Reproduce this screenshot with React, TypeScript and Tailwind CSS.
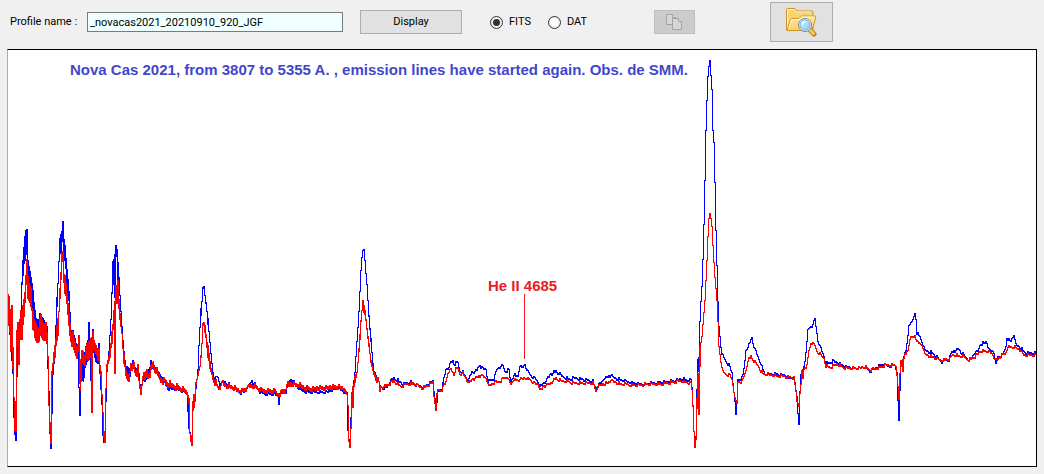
import React from "react";

// Each sample is [x, top, bottom]; when bottom is left out the trace is one thin line.
type Sample = [number, number, number?];

const blueProfile: Sample[] = [
  [8, 295, 322], [10, 310, 345], [12, 330, 370], [13, 360, 420], [14, 417, 436], [15, 425, 441], [16, 350, 389],
  [18, 340, 363], [20, 313, 325], [21, 283, 310], [22, 260, 285], [23, 246, 275], [24, 234, 262], [25, 227, 258],
  [26, 232, 258], [27, 237, 275], [28, 261, 280], [30, 270, 285], [32, 280, 308], [34, 303, 325], [36, 317, 335],
  [40, 315, 335], [44, 318, 335], [46, 328, 338], [48, 370, 400], [49, 390, 432], [50, 430, 446], [51, 410, 427],
  [52, 370, 388], [54, 350, 365], [55, 325, 345], [56, 296, 320], [57, 281, 305], [58, 258, 280], [59, 240, 262],
  [60, 235, 255], [61, 231, 252], [62, 220, 241], [63, 231, 252], [64, 236, 257], [66, 260, 285], [68, 279, 300],
  [69, 290, 315], [71, 330, 340], [74, 335, 348], [77, 345, 355], [78, 350, 390], [79, 391, 417], [80, 376, 416],
  [81, 360, 380], [83, 350, 380], [85, 348, 370], [87, 340, 362], [88, 321, 360], [89, 340, 355], [90, 350, 377],
  [92, 331, 350], [95, 345, 360], [98, 345, 360], [101, 375, 403], [102, 395, 433], [103, 425, 440], [104, 434, 440],
  [105, 403, 412], [106, 372, 385], [108, 350, 358], [110, 316, 330], [111, 294, 310], [112, 262, 295], [113, 259, 285],
  [114, 253, 296], [115, 243, 275], [116, 246, 254], [117, 254, 285], [118, 264, 295], [119, 278, 296], [121, 312, 325],
  [123, 340, 350], [125, 366, 373], [128, 366, 376], [131, 366, 369], [132, 361, 367], [135, 366, 369], [137, 365, 370],
  [138, 368, 374], [140, 388, 393], [142, 378, 381], [144, 379, 382], [146, 375, 380], [148, 368, 372], [150, 361, 367],
  [153, 362, 368], [156, 368, 371], [158, 371, 374], [162, 376, 379], [165, 382, 385], [168, 386, 389], [174, 387, 389],
  [180, 388, 390], [186, 391, 393], [188, 400, 425], [190, 434, 442], [191, 440, 444], [192, 410, 420], [193, 398, 408],
  [195, 390, 400], [196, 380], [197, 370], [198, 345, 355], [200, 306, 325], [202, 289, 300], [203, 287, 290],
  [204, 288, 295], [206, 301, 310], [208, 320, 333], [210, 345, 354], [212, 365, 371], [214, 378, 381], [217, 376],
  [219, 383], [223, 380, 382], [226, 382, 384], [232, 386, 388], [240, 391, 393], [243, 390, 392], [248, 385, 387],
  [251, 380, 383], [255, 384, 386], [260, 391, 393], [268, 392, 394], [273, 392, 394], [277, 393, 395], [278, 395, 403],
  [279, 392, 395], [285, 391], [288, 381, 383], [291, 378, 381], [294, 382, 384], [300, 388, 390], [306, 390, 392],
  [313, 391], [320, 391], [326, 391], [332, 388, 390], [338, 387], [342, 390], [346, 392], [347, 400, 430],
  [349, 440, 445], [350, 415, 425], [352, 390, 400], [354, 372], [356, 340], [358, 312], [360, 270], [361, 257],
  [362, 249], [363, 248], [364, 255, 262], [366, 275, 285], [368, 301, 315], [370, 325, 338], [372, 355, 370],
  [374, 371], [376, 375], [379, 384], [382, 387], [386, 386], [389, 381], [393, 377], [397, 379], [402, 383],
  [410, 381], [416, 384], [422, 386], [428, 383], [432, 380], [434, 390, 401], [436, 402], [437, 390], [441, 388],
  [443, 378], [445, 369], [448, 366], [450, 361], [452, 360], [454, 363], [457, 361], [459, 370], [462, 371],
  [465, 376], [468, 379], [471, 371], [475, 370], [479, 364], [481, 367], [485, 368], [487, 380], [490, 379],
  [493, 378], [496, 369], [499, 366], [502, 364], [504, 370], [508, 369], [510, 382], [513, 374], [517, 375],
  [519, 365], [521, 367], [524, 364], [527, 370], [531, 375], [535, 378], [540, 385], [545, 380], [549, 374],
  [555, 370], [560, 374], [567, 378], [575, 377], [585, 379], [592, 380], [594, 385], [596, 386], [600, 382],
  [604, 377], [610, 374], [614, 377], [622, 379], [632, 382], [642, 383], [652, 382], [662, 381], [672, 380],
  [680, 378], [690, 379], [691, 386], [692, 404], [693, 430], [694, 443], [695, 435], [696, 390], [697, 360],
  [698, 357, 371], [699, 320, 370], [700, 300], [701, 285], [702, 260], [703, 225], [704, 180], [705, 130],
  [706, 100], [707, 75], [708, 64, 70], [709, 62, 66], [710, 66, 76], [711, 88], [712, 110, 130], [713, 140],
  [714, 180], [715, 230], [716, 265], [717, 300], [718, 325], [720, 345], [721, 352], [724, 358], [728, 364],
  [731, 371], [732, 382], [733, 390], [734, 398], [735, 405, 415], [736, 400], [737, 379], [740, 378], [742, 375],
  [744, 360], [745, 350], [748, 344], [751, 337], [753, 345], [756, 353], [760, 362], [764, 373], [770, 373],
  [785, 374], [788, 377], [792, 376], [794, 382], [796, 395], [797, 412], [798, 418, 423], [799, 390], [800, 375],
  [801, 371], [803, 366], [804, 360], [806, 342], [807, 330], [808, 328], [811, 325], [813, 321], [814, 318],
  [815, 325], [817, 339], [819, 345], [822, 352], [825, 362], [829, 362], [832, 360], [838, 362], [845, 366],
  [855, 367], [865, 366], [869, 370], [875, 367], [882, 363], [888, 365], [894, 364], [896, 370], [897, 400],
  [898, 415, 421], [899, 390], [900, 363], [902, 358], [905, 350], [907, 335], [908, 324], [911, 322], [913, 316],
  [914, 313], [915, 317], [916, 332], [919, 335], [921, 340], [924, 349], [932, 352], [938, 358], [941, 361],
  [944, 358], [948, 359], [951, 351], [958, 348], [962, 353], [969, 360], [973, 353], [977, 350], [980, 343],
  [986, 341], [988, 348], [993, 351], [995, 363], [997, 356], [1002, 354], [1005, 346], [1006, 337], [1010, 340],
  [1013, 334], [1015, 343], [1020, 347], [1025, 352], [1035, 352],
];

const redProfile: Sample[] = [
  [7, 294, 320], [9, 296, 332], [10, 308, 350], [11, 303, 340], [12, 318, 365], [13, 350, 400], [14, 400, 432],
  [15, 402, 432], [16, 330, 402], [17, 321, 345], [18, 320, 362], [19, 316, 350], [20, 312, 342], [21, 313, 340],
  [22, 305, 332], [24, 290, 315], [25, 272, 300], [26, 262, 288], [27, 270, 300], [29, 283, 302], [31, 286, 308],
  [32, 305, 326], [34, 320, 338], [36, 322, 341], [38, 325, 338], [40, 316, 338], [43, 322, 339], [45, 319, 336],
  [46, 328, 345], [47, 333, 360], [48, 356, 405], [49, 405, 430], [50, 420, 441], [51, 368, 420], [52, 366, 378],
  [53, 354, 368], [55, 338, 358], [56, 324, 345], [58, 308, 333], [59, 290, 310], [60, 273, 300], [61, 252, 280],
  [62, 251, 262], [63, 260, 280], [64, 271, 290], [66, 285, 305], [67, 294, 315], [69, 312, 334], [71, 330, 343],
  [73, 335, 350], [76, 345, 357], [78, 338, 355], [79, 376, 385], [80, 360, 392], [81, 350, 382], [82, 350, 362],
  [84, 352, 362], [86, 345, 360], [88, 340, 360], [90, 335, 355], [91, 340, 415], [92, 333, 350], [94, 340, 350],
  [96, 343, 353], [98, 350, 362], [100, 365, 375], [101, 370, 395], [102, 392, 410], [103, 410, 434], [104, 434, 445],
  [105, 390, 445], [106, 365, 390], [107, 360, 370], [108, 355, 363], [110, 340, 355], [112, 325, 345], [113, 310, 330],
  [114, 300, 372], [115, 283, 300], [117, 283, 300], [119, 300, 320], [121, 325, 332], [123, 345, 360], [125, 366, 376],
  [127, 373, 380], [128, 373, 380], [130, 365, 371], [132, 364, 371], [133, 362, 368], [135, 370, 374], [137, 366, 373],
  [139, 380, 388], [140, 386, 394], [141, 384, 391], [142, 374, 382], [144, 374, 380], [146, 369, 378], [148, 372, 375],
  [150, 367, 374], [152, 362, 368], [153, 361, 369], [155, 368, 372], [157, 370, 376], [160, 376, 381], [164, 378, 382],
  [166, 380, 385], [170, 383, 387], [175, 384, 388], [180, 386, 390], [185, 389, 392], [187, 391, 396], [188, 392, 400],
  [189, 400, 435], [190, 434, 442], [191, 435, 445], [192, 400, 432], [193, 393, 410], [194, 391, 405], [195, 385, 405],
  [196, 380, 386], [198, 370, 376], [199, 365, 370], [201, 340, 355], [202, 325, 340], [203, 323, 327], [205, 325, 337],
  [207, 340, 355], [209, 355, 370], [211, 368, 374], [213, 376, 381], [215, 380, 384], [218, 386, 389], [222, 381, 384],
  [226, 384, 387], [232, 385, 388], [237, 388, 391], [241, 389, 392], [245, 387, 390], [249, 384, 387], [254, 384, 387],
  [260, 388, 391], [265, 389, 392], [275, 389, 392], [277, 393, 396], [281, 390, 393], [285, 388, 391], [287, 382, 386],
  [292, 382, 385], [298, 383, 386], [305, 386, 389], [312, 387, 390], [318, 386, 389], [325, 386, 389], [332, 385, 388],
  [338, 385, 388], [344, 387, 390], [346, 392, 395], [347, 395, 405], [348, 410, 440], [349, 440, 446], [350, 425, 438],
  [351, 395, 425], [352, 388, 410], [353, 385, 409], [354, 376, 387], [356, 370, 376], [358, 350, 365], [360, 320, 340],
  [362, 299, 303], [363, 302, 310], [365, 312, 322], [367, 328, 338], [369, 342, 352], [371, 361, 367], [373, 370, 374],
  [376, 376, 381], [378, 379, 382], [379, 385, 391], [380, 386], [385, 385], [390, 382], [393, 380], [397, 383],
  [401, 385], [405, 383], [409, 383], [413, 382], [417, 384], [421, 387], [425, 385], [430, 383], [432, 381],
  [433, 385, 395], [434, 397, 402], [435, 403, 408], [436, 395, 402], [437, 390, 396], [438, 389], [441, 389],
  [443, 384], [445, 381], [447, 372], [449, 370], [450, 368], [453, 373], [455, 368], [457, 367], [459, 373],
  [462, 372], [465, 377], [468, 382], [471, 379], [476, 376], [480, 374], [485, 377], [487, 381], [488, 385],
  [492, 382], [496, 381], [500, 380], [502, 377], [506, 376], [508, 379], [510, 383], [513, 379], [517, 379],
  [520, 378], [524, 377], [529, 378], [533, 382], [537, 383], [540, 389], [543, 385], [549, 383], [555, 377],
  [561, 380], [567, 380], [572, 382], [578, 382], [592, 382], [595, 389, 391], [598, 385], [602, 383], [607, 382],
  [610, 379], [614, 381], [620, 383], [635, 384], [650, 383], [662, 383], [672, 381], [680, 380], [690, 382],
  [691, 388], [692, 405], [693, 430], [694, 440, 446], [695, 438], [696, 400], [697, 374, 410], [698, 376, 414],
  [699, 345, 395], [701, 335], [702, 325], [704, 300], [706, 260], [707, 235], [708, 217], [709, 214], [710, 217],
  [711, 225], [712, 244], [714, 275], [716, 300], [717, 320], [718, 345], [720, 360], [722, 370], [725, 373],
  [729, 374], [731, 378], [733, 390], [735, 400], [736, 402], [737, 382], [739, 380], [741, 381], [743, 376],
  [745, 370], [747, 360], [750, 355], [753, 360], [757, 364], [760, 370], [763, 373], [780, 375], [790, 376],
  [793, 377], [795, 390], [796, 400], [798, 402, 405], [799, 392], [800, 385], [801, 371], [802, 371, 378],
  [804, 366], [806, 365], [808, 350], [810, 343], [812, 341], [814, 344], [816, 350], [820, 354], [823, 357],
  [825, 365], [830, 366], [837, 363], [845, 367], [855, 367], [865, 366], [870, 369], [877, 367], [885, 364],
  [895, 364], [896, 373], [898, 395, 400], [899, 373], [900, 360], [902, 358, 370], [904, 354], [907, 350],
  [909, 338], [912, 336], [914, 335], [917, 341], [921, 343], [924, 353], [932, 356], [940, 359], [949, 358],
  [952, 354], [962, 355], [968, 359], [975, 355], [980, 350], [986, 350], [991, 352], [995, 359], [999, 356],
  [1005, 352], [1007, 346], [1013, 346], [1020, 349], [1023, 354], [1035, 354],
];

// One vertical bar per column, joined into a single stepped line with a little grain.
const toPath = (samples: Sample[]) => {
  const first = samples[0];
  const last = samples[samples.length - 1];
  let d = "";
  let i = 0;
  let previous = first[1];

  for (let x = first[0]; x <= last[0]; x++) {
    while (i < samples.length - 2 && samples[i + 1][0] <= x) i++;
    const [x0, top0, bottom0 = top0] = samples[i];
    const [x1, top1, bottom1 = top1] = samples[i + 1];
    const t = (x - x0) / (x1 - x0);
    const spread = bottom0 - top0 + (bottom1 - top1);
    const grain = ((x * 7919) % 13) / 12 - 0.5;
    const jitter = Math.round(grain * Math.min(6, 2 + spread / 8));
    const top = Math.round(top0 + (top1 - top0) * t) + jitter;
    const bottom = Math.max(top + 1, Math.round(bottom0 + (bottom1 - bottom0) * t) + jitter);
    const falling = (top + bottom) / 2 >= previous;
    const [start, end] = falling ? [top, bottom] : [bottom, top];
    d += d ? `H${x + 0.5}V${start}V${end}` : `M${x + 0.5} ${start}V${end}`;
    previous = (top + bottom) / 2;
  }
  return d;
};

const CopyIcon = () => (
  <svg width="17" height="16" viewBox="0 0 17 16" fill="#d6d6d6" stroke="#a3a3a3" aria-hidden="true">
    <path d="M.5.5h6l3 3v7h-9z" />
    <path d="M6.5.5v3h3" fill="#e4e4e4" />
    <path d="M6.5 4.500h6l3 3v8h-9z" />
    <path d="M12.500 4.500v3h3" fill="#e4e4e4" />
  </svg>
);

const FolderSearchIcon = () => (
  <svg width="31" height="29" viewBox="0 0 31 29" aria-hidden="true">
    <defs>
      <linearGradient id="folder" x1="0" y1="0" x2="0" y2="1">
        <stop offset="0" stopColor="#ffeaa6" />
        <stop offset="1" stopColor="#fbcf62" />
      </linearGradient>
      <linearGradient id="lens" x1="0" y1="0" x2="1" y2="1">
        <stop offset="0" stopColor="#dff4ff" />
        <stop offset="1" stopColor="#7fcbf7" />
      </linearGradient>
    </defs>
    <path d="M.5 22V1.500q0-1 1-1h7q1 0 1.300 1l.7 1.500h15.500q1 0 1 1V22z" fill="#f9d472" stroke="#cf9528" />
    <path d="M1.500 20V1.500h7l1.500 2.500h15" fill="none" stroke="#fff0bd" />
    <path d="M1 22.500l3.500-11q.4-1 1.500-1h6.500l3-2.500H29q1 0 .8 1l-3.600 13.500z" fill="url(#folder)" stroke="#cf9528" />
    <path d="M2.500 21.500l3-10h7.500l3-2.500h12.500" fill="none" stroke="#fff3c8" />
    <path d="M24.500 22.500l3.500 3.500" stroke="#c8821c" strokeWidth="5" strokeLinecap="round" />
    <path d="M24 22l3.500 3.500" stroke="#ffc35a" strokeWidth="3" strokeLinecap="round" />
    <circle cx="19" cy="17" r="6.500" fill="#fff" stroke="#6d8291" />
    <circle cx="19" cy="17" r="5" fill="url(#lens)" stroke="#64b1e4" />
    <path d="M16 16.500q.5-2.500 3.500-3" fill="none" stroke="#fff" strokeWidth="1.500" />
  </svg>
);

const radioClass =
  "size-[13px] appearance-none rounded-full border border-[#333] bg-white bg-clip-content p-[2px] checked:bg-[#333]";

const Toolbar = () => {
  return (
    <form className="flex items-center pt-[2px] pb-[7px] pl-[3px] font-[Roboto,Arial,sans-serif] text-[11px] leading-4">
      <label htmlFor="profile" className="w-[77px] shrink-0 whitespace-nowrap">
        Profile name :
      </label>
      <input
        id="profile"
        type="text"
        defaultValue="_novacas2021_20210910_920_JGF"
        className="h-5 w-64 border border-[#7a7a7a] bg-[#f0ffff] px-[2px] outline-none"
      />
      <button type="button" className="ml-[17px] h-6 w-[102px] border border-[#adadad] bg-[#e1e1e1]">
        Display
      </button>
      <label className="ml-7 flex w-[58px] items-center gap-[6px]">
        <input type="radio" name="format" defaultChecked className={radioClass} />
        FITS
      </label>
      <label className="flex w-[58px] items-center gap-[6px]">
        <input type="radio" name="format" className={radioClass} />
        DAT
      </label>
      <button
        type="button"
        disabled
        aria-label="Copy"
        className="ml-12 flex h-6 w-[41px] items-center justify-center border border-[#bfbfbf] bg-[#cccccc]"
      >
        <CopyIcon />
      </button>
      <button
        type="button"
        aria-label="Open profile"
        className="ml-[75px] flex h-10 w-[63px] items-center justify-center border border-[#adadad] bg-[#e1e1e1]"
      >
        <FolderSearchIcon />
      </button>
    </form>
  );
};

const Spectrum = () => {
  return (
    <svg viewBox="8 50 1028 416" className="block h-auto w-full">
      <g fill="none" strokeWidth="1" shapeRendering="crispEdges">
        <path d={toPath(blueProfile)} stroke="#0000ff" />
        <path d={toPath(redProfile)} stroke="#ff0000" />
        <path d="M524.500 294V359" stroke="#ed1c24" />
      </g>
      <text x="70" y="75" fill="#3f48cc" className="text-[15px] font-bold">
        Nova Cas 2021, from 3807 to 5355 A. , emission lines have started again. Obs. de SMM.
      </text>
      <text x="488" y="291" fill="#ed1c24" className="text-[15px] font-bold">
        He II 4685
      </text>
    </svg>
  );
};

const App = () => {
  return (
    <main className="bg-[#f0f0f0] px-[7px] pb-[7px] font-['Liberation_Sans',Arial,sans-serif] text-black">
      <Toolbar />
      <div className="border border-black border-l-[#ffa500] bg-white">
        <Spectrum />
      </div>
    </main>
  );
};

export default App;
